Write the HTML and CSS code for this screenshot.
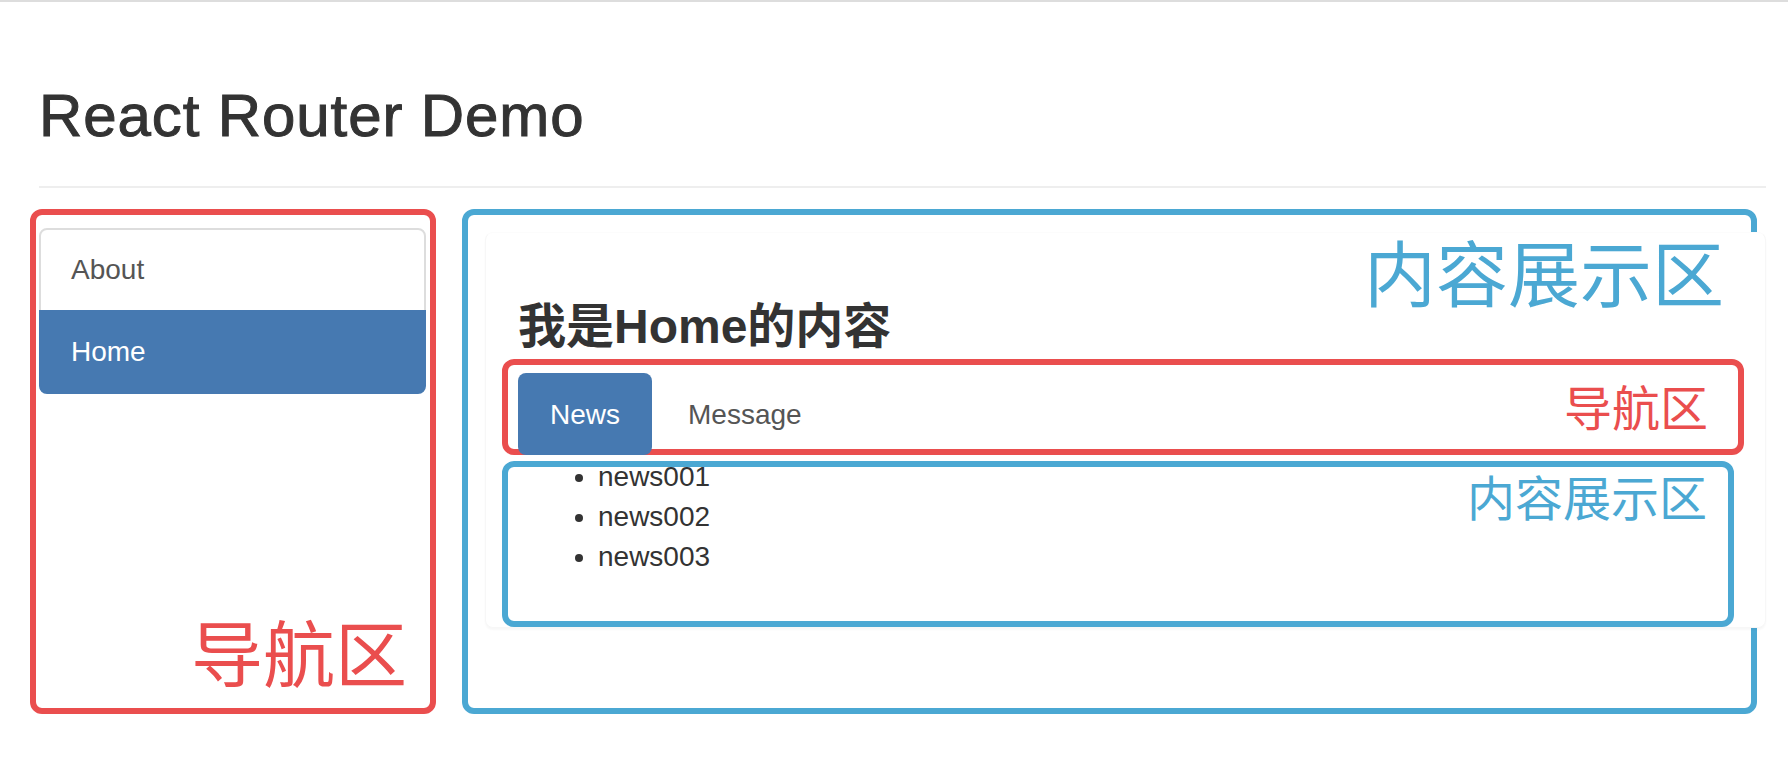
FILE: index.html
```html
<!DOCTYPE html>
<html lang="zh-CN">
<head>
    <meta charset="UTF-8">
    <meta name="viewport" content="width=device-width, initial-scale=1.0">
    <title>React Router Demo</title>
    <link rel="stylesheet" href="styles.css">
</head>

<body>
    <div class="container">
        <div class="page-header">
            <h2>React Router Demo</h2>
        </div>

        <div class="row">
            <!-- left: nav area -->
            <div class="zone side">
                <div class="list-group">
                    <a class="list-group-item" href="#about">About</a>
                    <a class="list-group-item active" href="#home">Home</a>
                </div>
                <div class="zone-label">导航区</div>
            </div>

            <!-- right: content area -->
            <div class="zone main">
                <div class="zone-label">内容展示区</div>
                <div class="panel">
                    <div class="panel-body">
                        <h3>我是Home的内容</h3>
                        <div class="sub_nav">
                            <div class="mark mark_red"><span>导航区</span></div>
                            <ul class="nav_pills">
                                <li class="active"><a href="#news">News</a></li>
                                <li><a href="#message">Message</a></li>
                            </ul>
                        </div>
                        <div class="sub_view">
                            <div class="mark mark_blue"><span>内容展示区</span></div>
                            <ul class="news_list">
                                <li>news001</li>
                                <li>news002</li>
                                <li>news003</li>
                            </ul>
                        </div>
                    </div>
                </div>
            </div>
        </div>
    </div>
</body>
</html>
```

FILE: styles.css
```css
body{
    margin: 0;
    border-top: 2px solid #dddddd;
    background: #fff;
    color: #333;
    font-family: "Liberation Sans", "Noto Sans CJK SC", sans-serif;
    font-size: 28px;
    line-height: 40px;
}

.container{
    padding: 0 22px 0 39px;
}

.page-header{
    margin: 81px 0 21px;
    padding-bottom: 17px;
    border-bottom: 2px solid #eeeeee;
}

    .page-header > h2{
        margin: 0 0 20px;
        font-size: 60px;
        line-height: 66px;
        font-weight: 500;
        letter-spacing: 0.9px;
        -webkit-text-stroke: 1px #333;
        color: #333;
    }

.row{
    display: grid;
    grid-template-columns: 406px 1295px;
    column-gap: 26px;
    margin-left: -9px;
}

/* the hand drawn frames */
.zone{
    border: 6px solid;
    border-radius: 12px;
}

.zone-label{
    font-size: 72px;
    line-height: 72px;
}

.side{
    border-color: #ea4e4e;
    padding: 13px 4px 0 3px;
    display: flex;
    flex-direction: column;
}

    .side > .zone-label{
        margin: auto 19px 16px 0;
        align-self: flex-end;
        color: #ea4e4e;
    }

.main{
    border-color: #4ba8d3;
    padding: 17px 0 80px 17px;
    position: relative;
}

    .main > .zone-label{
        position: absolute;
        top: 25px;
        right: 27px;
        z-index: 2;
        color: #4ba8d3;
    }

.list-group{
    display: block;
}

    .list-group > .list-group-item{
        display: block;
        padding: 20px 30px;
        line-height: 40px;
        border: 2px solid #dddddd;
        margin-bottom: -2px;
        background: #fff;
        color: #555;
        text-decoration: none;
    }

    .list-group > .list-group-item:first-child{
        border-radius: 8px 8px 0 0;
    }

    .list-group > .list-group-item:last-child{
        border-radius: 0 0 8px 8px;
        margin-bottom: 0;
    }

    .list-group > .active{
        background: #4679b1;
        border-color: #4679b1;
        color: #fff;
    }

.panel{
    margin-right: -15px;
    background: #fff;
    border: 1px solid #f7f7f7;
    border-top-color: #fcfcfc;
    border-radius: 8px;
    box-shadow: 0 2px 2px rgba(0, 0, 0, 0.03);
}

.panel-body{
    padding: 30px 30px 30px 32px;
}

    .panel-body > h3{
        margin: 38px 0 19px;
        font-size: 48px;
        line-height: 52.8px;
        font-weight: bold;
        color: #333;
    }

.sub_nav{
    position: relative;
}

.sub_view{
    position: relative;
}

.mark{
    position: absolute;
    border: 6px solid;
    border-radius: 12px;
    text-align: right;
    font-size: 48px;
    line-height: 48px;
}

.mark_red{
    inset: -14px -9px 0 -16px;
    border-color: #ea4e4e;
    color: #ea4e4e;
    padding: 21px 30px 0 0;
}

.mark_blue{
    inset: 4px 1px -50px -16px;
    border-color: #4ba8d3;
    color: #4ba8d3;
    padding: 9px 21px 0 0;
}

.nav_pills{
    display: flex;
    gap: 4px;
    list-style: none;
    margin: 0;
    padding: 0;
}

    .nav_pills > li > a{
        position: relative;
        z-index: 1;
        display: block;
        padding: 22px 32px 20px;
        line-height: 40px;
        border-radius: 8px;
        color: #555;
        text-decoration: none;
    }

    .nav_pills > li.active > a{
        background: #4679b1;
        color: #fff;
    }

.news_list{
    margin: 2px 0 20px;
    padding-left: 80px;
    color: #333;
}
```
